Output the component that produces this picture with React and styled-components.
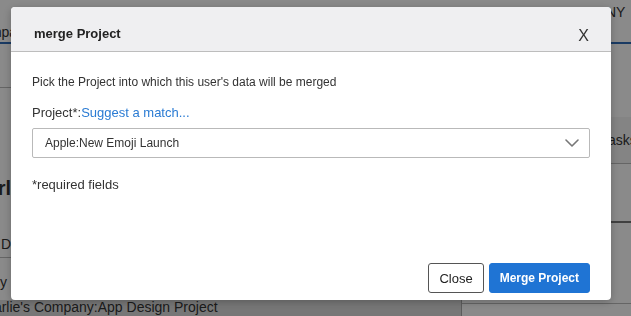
import React from 'react';
import styled, { createGlobalStyle } from 'styled-components';

const GlobalStyle = createGlobalStyle`
  html, body { margin: 0; padding: 0; }
  body {
    width: 631px;
    height: 316px;
    overflow: hidden;
    font-family: 'Liberation Sans', Arial, sans-serif;
    color: #333;
    background: #fff;
  }
`;

// --- background page (dimmed behind the dialog) ---
const Page = styled.div`
  width: 631px;
  height: 316px;
  overflow: hidden;
  display: flex;
  flex-direction: column;
`;

const TopNav = styled.nav`
  display: grid;
  grid-template-columns: 151px 129px 118px 117px auto;
  height: 22px;
  padding: 4px 0 0 16px;
  box-sizing: border-box;
  font-size: 13px;
  color: #333;
  text-transform: uppercase;
  white-space: nowrap;
`;

const NavItem = styled.span`
  font-size: ${p => (p.$wide ? 14 : 13)}px;
`;

const SubBar = styled.div`
  height: 22px;
  border-bottom: 2px solid #2f6cb8;
  display: flex;
  align-items: flex-end;
  padding-bottom: 2px;
  box-sizing: border-box;
  margin-left: -28px;
  font-size: 14px;
`;

const Content = styled.div`
  flex: 1;
  display: grid;
  grid-template-columns: 461px 1fr;
`;

const LeftCol = styled.div`
  display: flex;
  flex-direction: column;
`;

const RightCol = styled.div`
  display: flex;
  flex-direction: column;
  border-left: 1px solid #aaa;
  padding-top: 73px;
`;

const Row = styled.div`
  height: ${p => p.$h}px;
  flex-shrink: 0;
  box-sizing: border-box;
  padding-top: ${p => p.$top || 0}px;
  text-indent: ${p => p.$shift || 0}px;
  font-size: ${p => (p.$big ? 20 : 14)}px;
  line-height: ${p => (p.$big ? 24 : 14)}px;
  font-weight: ${p => (p.$big ? 700 : 400)};
  border-bottom: ${p => (p.$line ? '1px solid #bbb' : 'none')};
  background: ${p => p.$bg || 'transparent'};
  white-space: nowrap;
`;

const Cell = styled.div`
  height: ${p => p.$h}px;
  display: flex;
  align-items: center;
  font-size: 14px;
  border-bottom: ${p => p.$thick ? '2px solid #777' : '1px solid #bbb'};
  background: ${p => p.$bg || 'transparent'};
  padding-left: 139px;
  white-space: nowrap;
`;

const Backdrop = styled.div`
  position: fixed;
  inset: 0;
  background: rgba(0, 0, 0, 0.46);
`;

// --- dialog ---
const Dialog = styled.div`
  position: fixed;
  left: 11px;
  top: 7px;
  width: 600px;
  height: 293px;
  background: #fff;
  border-radius: 4px;
  box-shadow: 0 2px 8px rgba(0, 0, 0, 0.25);
  display: flex;
  flex-direction: column;
  overflow: hidden;
`;

const Header = styled.div`
  height: 45px;
  background: #efeff1;
  border-bottom: 1px solid #bdbdbd;
  display: flex;
  align-items: center;
  justify-content: space-between;
  padding: 8px 22px 0 23px;
  box-sizing: border-box;
`;

const Title = styled.h3`
  margin: 0;
  font-size: 13px;
  font-weight: 700;
  color: #222;
`;

const CloseX = styled.button`
  border: none;
  background: none;
  padding: 0;
  margin-top: 6px;
  font-family: inherit;
  font-size: 16px;
  color: #333;
  cursor: pointer;
`;

const Body = styled.div`
  flex: 1;
  padding: 23px 21px 0 21px;
  display: flex;
  flex-direction: column;
`;

const Hint = styled.p`
  margin: 0;
  font-size: 12px;
  line-height: 14px;
  color: #333;
`;

const Label = styled.div`
  margin-top: 16px;
  font-size: 13px;
  line-height: 16px;
  color: #333;
`;

const Link = styled.a`
  color: #2a7bd3;
  text-decoration: none;
`;

const Select = styled.div`
  margin-top: 7px;
  height: 30px;
  box-sizing: border-box;
  border: 1px solid #b9b9b9;
  border-radius: 2px;
  display: flex;
  align-items: center;
  justify-content: space-between;
  padding: 0 10px 0 12px;
  font-size: 12px;
  color: #333;
`;

const Required = styled.div`
  margin-top: 19px;
  font-size: 13px;
  line-height: 16px;
  color: #333;
`;

const Footer = styled.div`
  display: flex;
  justify-content: flex-end;
  gap: 5px;
  padding: 0 21px 7px 0;
`;

const Button = styled.button`
  height: 30px;
  box-sizing: border-box;
  padding: 0 10px;
  border-radius: 3px;
  font-family: inherit;
  font-size: ${p => (p.$primary ? 12 : 13)}px;
  font-weight: ${p => (p.$primary ? 700 : 400)};
  color: ${p => (p.$primary ? '#fff' : '#222')};
  background: ${p => (p.$primary ? '#1f74d4' : '#fff')};
  border: 1px solid ${p => (p.$primary ? '#1f74d4' : '#555')};
  cursor: pointer;
`;

function Chevron() {
  return (
    <svg width="14" height="8" viewBox="0 0 14 8" fill="none">
      <path d="M1 1l6 6 6-6" stroke="#777" strokeWidth="1.6" strokeLinecap="round" strokeLinejoin="round" />
    </svg>
  );
}

export default function App() {
  return (
    <>
      <GlobalStyle />
      <Page>
        <TopNav>
          <NavItem>Time &amp; Expense</NavItem>
          <NavItem>Workflow</NavItem>
          <NavItem>Invoicing</NavItem>
          <NavItem>Analytics</NavItem>
          <NavItem $wide>My Company</NavItem>
        </TopNav>
        <SubBar>Company</SubBar>
        <Content>
          <LeftCol>
            <Row $h={44} $line />
            <Row $h={141} $big $top={88} $shift={-40}>Charlie</Row>
            <Row $h={29} $line $top={8} $shift={1}>Design</Row>
            <Row $h={42} $top={17} $shift={-53}>Company ...</Row>
            <Row $h={16} $top={0} $bg="#dcdcdc" $shift={-24}>Charlie's Company:App Design Project</Row>
          </LeftCol>
          <RightCol>
            <Cell $h={46} $bg="#f4f4f4">Tasks</Cell>
            <Cell $h={57} $thick />
            <Cell $h={80} />
          </RightCol>
        </Content>
      </Page>
      <Backdrop />
      <Dialog role="dialog">
        <Header>
          <Title>merge Project</Title>
          <CloseX>X</CloseX>
        </Header>
        <Body>
          <Hint>Pick the Project into which this user's data will be merged</Hint>
          <Label>
            Project*:<Link href="#">Suggest a match...</Link>
          </Label>
          <Select>
            <span>Apple:New Emoji Launch</span>
            <Chevron />
          </Select>
          <Required>*required fields</Required>
        </Body>
        <Footer>
          <Button>Close</Button>
          <Button $primary>Merge Project</Button>
        </Footer>
      </Dialog>
    </>
  );
}
